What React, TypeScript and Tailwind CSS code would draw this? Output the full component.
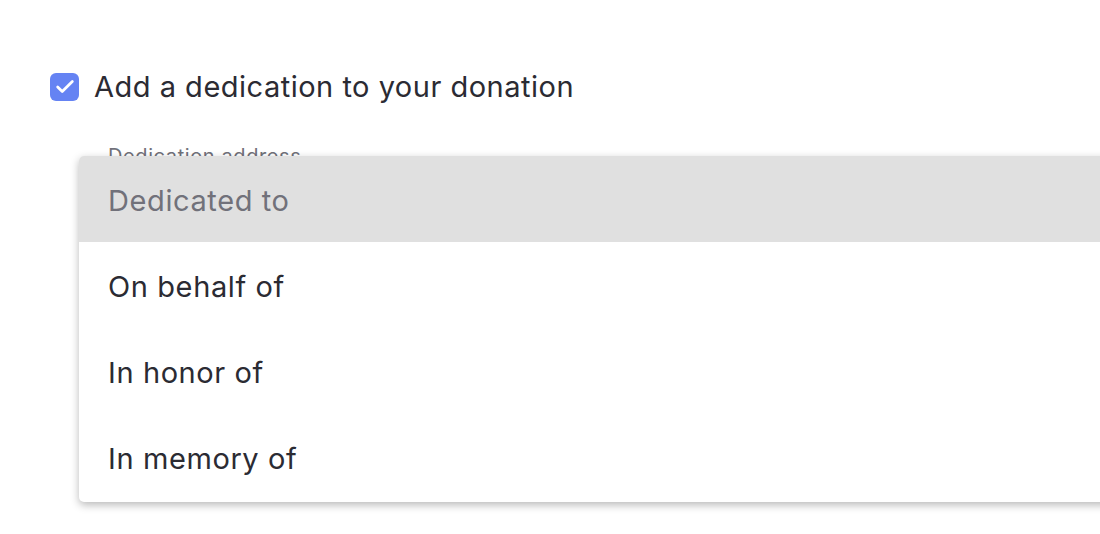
import React, { useState } from "react";
import { Check } from "lucide-react";

const options = ["Dedicated to", "On behalf of", "In honor of", "In memory of"];

export default function App() {
  const [checked, setChecked] = useState(true);
  const [selected, setSelected] = useState<string | null>(null);

  return (
    <main
      className="min-h-screen w-full bg-white overflow-hidden text-[#2b2b33]"
      style={{ fontFamily: "Inter, 'Noto Sans', sans-serif" }}
    >
      <div className="pl-[50px] pt-[73px]">
        <label className="flex items-center gap-[15px] cursor-pointer">
          <button
            onClick={() => setChecked(!checked)}
            className="flex h-[28px] w-[29px] items-center justify-center rounded-[6px] bg-[#6583f3]"
          >
            {checked && <Check className="h-[22px] w-[22px] text-white" strokeWidth={3} />}
          </button>
          <span className="text-[29px] leading-[28px] tracking-[0.5px]">
            Add a dedication to your donation
          </span>
        </label>

        <div className="relative ml-[29px] mt-[44px]">
          <div className="pl-[29px] text-[20px] leading-[22px] tracking-[0.6px] text-[#71717a]">
            Dedication address
          </div>
          <div className="h-[60px] rounded-[4px] border border-[#d4d4d8]" />

          <ul className="absolute left-0 top-[11px] w-[1100px] rounded-[5px] bg-white pb-[2px] shadow-[0_3px_8px_rgba(0,0,0,0.28)] overflow-hidden">
            {options.map((opt, i) => (
              <li
                key={opt}
                onClick={() => setSelected(opt)}
                className={
                  i === 0
                    ? "flex h-[86px] items-center bg-[#e0e0e0] pl-[29px] pt-[3px] text-[29px] tracking-[0.6px] text-[#71717a]"
                    : "flex h-[86px] items-center pl-[29px] pt-[3px] text-[29px] tracking-[0.6px] text-[#2b2b33]"
                }
              >
                {opt}
              </li>
            ))}
          </ul>
        </div>
      </div>
    </main>
  );
}
